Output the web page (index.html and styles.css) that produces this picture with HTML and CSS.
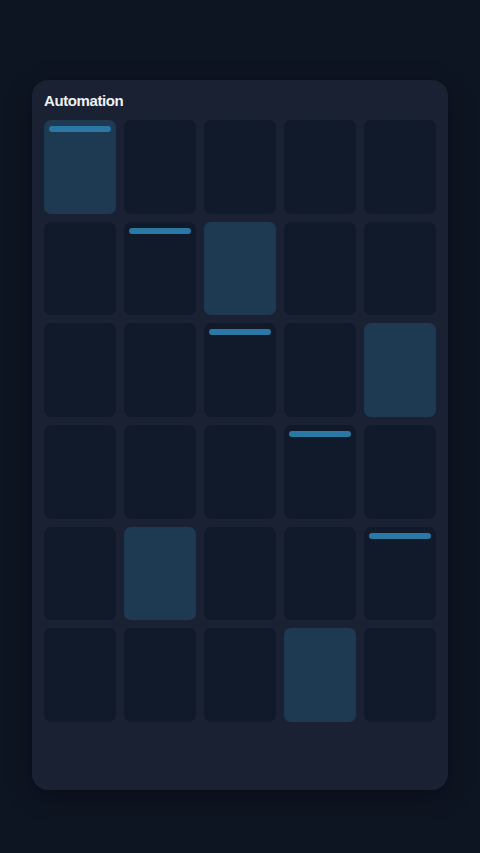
FILE: index.html
```html
<!DOCTYPE html>
<html lang="en">
<head>
    <meta charset="UTF-8">
    <meta name="viewport" content="width=device-width, initial-scale=1.0">
    <title>Automation</title>
    <link rel="stylesheet" href="styles.css">
</head>
<body>
    <div class="panel">
        <h2 class="title">Automation</h2>
        <div class="grid">
            <div class="cell on"><span class="bar"></span></div>
            <div class="cell"></div>
            <div class="cell"></div>
            <div class="cell"></div>
            <div class="cell"></div>

            <div class="cell"></div>
            <div class="cell"><span class="bar"></span></div>
            <div class="cell on"></div>
            <div class="cell"></div>
            <div class="cell"></div>

            <div class="cell"></div>
            <div class="cell"></div>
            <div class="cell"><span class="bar"></span></div>
            <div class="cell"></div>
            <div class="cell on"></div>

            <div class="cell"></div>
            <div class="cell"></div>
            <div class="cell"></div>
            <div class="cell"><span class="bar"></span></div>
            <div class="cell"></div>

            <div class="cell"></div>
            <div class="cell on"></div>
            <div class="cell"></div>
            <div class="cell"></div>
            <div class="cell"><span class="bar"></span></div>

            <div class="cell"></div>
            <div class="cell"></div>
            <div class="cell"></div>
            <div class="cell on"></div>
            <div class="cell"></div>
        </div>
    </div>
</body>
</html>
```

FILE: styles.css
```css
body {
    margin: 0;
    min-height: 100vh;
    background: #0e1522;
    font-family: "Liberation Sans", Arial, sans-serif;
    padding: 80px 32px 0;
    box-sizing: border-box;
}
.panel {
    height: 710px;
    background: #1a2133;
    border-radius: 16px;
    padding: 12px;
    box-sizing: border-box;
    box-shadow: 0 6px 24px rgba(0, 0, 0, 0.35);
}
.title {
    margin: 0 0 10px;
    font-size: 15px;
    line-height: 18px;
    font-weight: bold;
    letter-spacing: -0.4px;
    color: #eef2f7;
}
.grid {
    display: grid;
    grid-template-columns: repeat(5, 1fr);
    grid-template-rows: repeat(6, 1fr);
    gap: 8px;
    height: 602px;
}
.cell {
    background: #111a2a;
    border-radius: 7px;
    padding: 6px 5px;
}
.cell.on {
    background: #1e3a53;
}
.bar {
    display: block;
    height: 6px;
    border-radius: 3px;
    background: #2a78a3;
}
```
